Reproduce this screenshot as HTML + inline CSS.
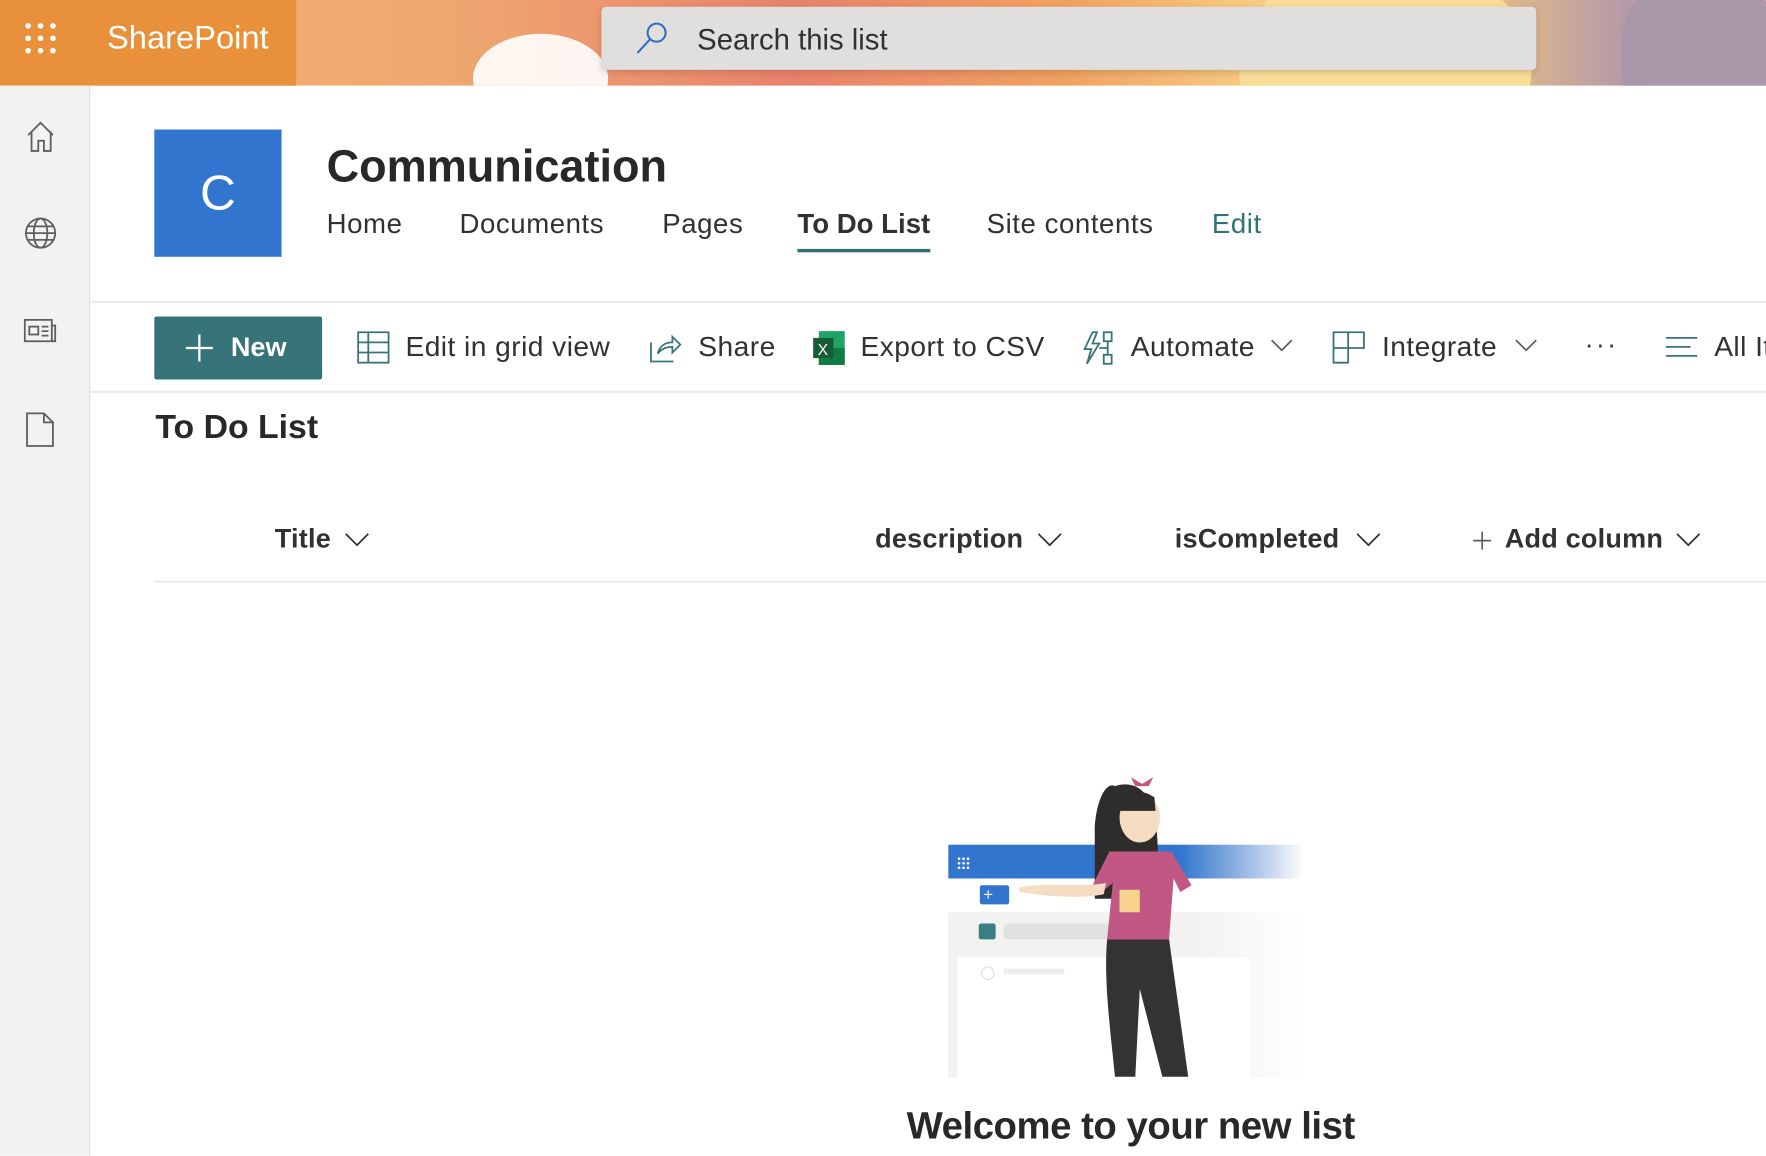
<!DOCTYPE html>
<html><head><meta charset="utf-8"><style>
html,body{margin:0;padding:0;width:1766px;height:1156px;overflow:hidden;background:#fff}
#s{position:absolute;left:0;top:0;width:1568px;height:1026px;transform:scale(1.12628);transform-origin:0 0;font-family:"Liberation Sans",sans-serif;color:#323130}
.a{position:absolute;white-space:nowrap}
.nav{font-size:24.5px;top:186px;letter-spacing:.5px}
.cmd{font-size:25px;top:294px;letter-spacing:.4px}
.col{font-size:24px;font-weight:bold;top:465px;letter-spacing:.2px}
</style></head><body><div id="s">
<!-- banner -->
<div class="a" style="left:0;top:0;width:1568px;height:76px;background:linear-gradient(90deg,#f1b56f 0%,#efa870 25%,#e8826a 45%,#f0a060 60%,#f7cf86 72%,#f5c77a 82%,#b59aa8 92%,#e9a6b8 100%);overflow:hidden">
 <div class="a" style="left:420px;top:30px;width:120px;height:80px;border-radius:50%;background:#fff;opacity:.9"></div>
 <div class="a" style="left:1100px;top:-40px;width:260px;height:200px;border-radius:50%;background:#f9dc96"></div>
 <div class="a" style="left:1440px;top:-20px;width:140px;height:140px;border-radius:40%;background:#a998a9"></div>
</div>
<div class="a" style="left:0;top:0;width:263px;height:76px;background:#e8903a"></div>
<svg class="a" style="left:22px;top:20px" width="30" height="30"><g fill="#fff"><circle cx="3" cy="3" r="2.5"/><circle cx="14" cy="3" r="2.5"/><circle cx="25" cy="3" r="2.5"/><circle cx="3" cy="14" r="2.5"/><circle cx="14" cy="14" r="2.5"/><circle cx="25" cy="14" r="2.5"/><circle cx="3" cy="25" r="2.5"/><circle cx="14" cy="25" r="2.5"/><circle cx="25" cy="25" r="2.5"/></g></svg>
<div class="a" style="left:95px;top:18px;font-size:29px;color:#fff">SharePoint</div>
<div class="a" style="left:534px;top:6px;width:830px;height:56px;background:#e1dfdd;border-radius:4px;box-shadow:0 2px 6px rgba(0,0,0,.15)"></div>
<svg class="a" style="left:563px;top:18px" width="32" height="32"><circle cx="20" cy="11" r="8" fill="none" stroke="#2b6cc4" stroke-width="1.8"/><path d="M14 17 L3 29" stroke="#2b6cc4" stroke-width="1.8"/></svg>
<div class="a" style="left:619px;top:20px;font-size:26px">Search this list</div>
<!-- left rail -->
<div class="a" style="left:0;top:76px;width:79px;height:950px;background:#f3f2f1;border-right:1px solid #e1dfdd"></div>
<svg class="a" style="left:22px;top:107px" width="30" height="30" fill="none" stroke="#605e5c" stroke-width="1.6"><path d="M3 13 L14 2 L25 13 M6 10 V27 H12 V18 H17 V27 H23 V10"/></svg>
<svg class="a" style="left:21px;top:192px" width="30" height="30" fill="none" stroke="#605e5c" stroke-width="1.6"><circle cx="15" cy="15" r="13"/><ellipse cx="15" cy="15" rx="6" ry="13"/><path d="M2 15H28M4 9H26M4 21H26"/></svg>
<svg class="a" style="left:21px;top:283px" width="30" height="22" fill="none" stroke="#605e5c" stroke-width="1.6"><path d="M1 1H25V20H1Z M25 6H28V20H25"/><rect x="5" y="7" width="8" height="7"/><path d="M16 7H22M16 11H22M16 15H22"/></svg>
<svg class="a" style="left:23px;top:366px" width="26" height="32" fill="none" stroke="#605e5c" stroke-width="1.6"><path d="M1 1H16L24 9V30H1Z M16 1V9H24"/></svg>
<!-- site header -->
<div class="a" style="left:137px;top:115px;width:113px;height:113px;background:#3275cf;color:#fff;font-size:44px;text-align:center;line-height:113px">C</div>
<div class="a" style="left:290px;top:126px;font-size:40px;font-weight:bold;color:#292827">Communication</div>
<div class="a nav" style="left:290px">Home</div>
<div class="a nav" style="left:408px">Documents</div>
<div class="a nav" style="left:588px">Pages</div>
<div class="a nav" style="left:708px;font-weight:bold;letter-spacing:0">To Do List</div>
<div class="a" style="left:708px;top:221px;width:118px;height:3px;background:#2e6f73"></div>
<div class="a nav" style="left:876px">Site contents</div>
<div class="a nav" style="left:1076px;color:#2e7478">Edit</div>
<div class="a" style="left:80px;top:267px;width:1488px;height:2px;background:#edebe9"></div>
<!-- command bar -->
<div class="a" style="left:137px;top:281px;width:149px;height:56px;background:#377479;border-radius:2px"></div>
<svg class="a" style="left:164px;top:296px" width="26" height="26" stroke="#fff" stroke-width="2"><path d="M13 1V25M1 13H25"/></svg>
<div class="a" style="left:205px;top:295px;font-size:24px;color:#fff;font-weight:bold">New</div>
<svg class="a" style="left:317px;top:294px" width="30" height="30" fill="none" stroke="#377479" stroke-width="1.6"><rect x="1" y="1" width="27" height="27"/><path d="M1 10H28M1 19H28M10 1V28"/></svg>
<div class="a cmd" style="left:360px">Edit in grid view</div>
<svg class="a" style="left:576px;top:294px" width="30" height="30" fill="none" stroke="#377479" stroke-width="1.6"><path d="M2 10V27H22 M8 20C10 12 16 10 21 10V5L28 12L21 19V14C15 14 11 16 8 20Z"/></svg>
<div class="a cmd" style="left:620px">Share</div>
<svg class="a" style="left:721px;top:293px" width="30" height="32"><rect x="6" y="1" width="23" height="30" fill="#21a366"/><rect x="6" y="16" width="23" height="15" fill="#107c41"/><rect x="1" y="7" width="18" height="18" fill="#185c37"/><text x="5" y="22" font-size="14" fill="#fff" font-family="Liberation Sans">X</text></svg>
<div class="a cmd" style="left:764px">Export to CSV</div>
<svg class="a" style="left:960px;top:293px" width="32" height="32" fill="none" stroke="#377479" stroke-width="1.6"><path d="M10 2L3 17H9L5 30L16 12H10L14 2Z"/><rect x="20" y="2" width="7" height="8"/><rect x="20" y="22" width="7" height="8"/><path d="M23.5 10V22M16 16H23"/></svg>
<div class="a cmd" style="left:1004px">Automate</div>
<svg class="a" style="left:1128px;top:301px" width="20" height="12" fill="none" stroke="#605e5c" stroke-width="1.5"><path d="M1 1L10 10L19 1"/></svg>
<svg class="a" style="left:1183px;top:294px" width="30" height="30" fill="none" stroke="#377479" stroke-width="1.6"><path d="M1 1H28V15H14V28H1Z M14 1V15 M1 15H14"/></svg>
<div class="a cmd" style="left:1227px">Integrate</div>
<svg class="a" style="left:1345px;top:301px" width="20" height="12" fill="none" stroke="#605e5c" stroke-width="1.5"><path d="M1 1L10 10L19 1"/></svg>
<div class="a" style="left:1407px;top:293px;font-size:24px;letter-spacing:2px">···</div>
<svg class="a" style="left:1479px;top:298px" width="30" height="22" stroke="#377479" stroke-width="1.6"><path d="M0 2H28M0 10H22M0 18H28"/></svg>
<div class="a cmd" style="left:1522px">All Items</div>
<div class="a" style="left:80px;top:347px;width:1488px;height:2px;background:#edebe9"></div>
<!-- list -->
<div class="a" style="left:138px;top:363px;font-size:30px;font-weight:bold;color:#292827">To Do List</div>
<div class="a col" style="left:244px">Title</div>
<svg class="a" style="left:306px;top:473px" width="22" height="13" fill="none" stroke="#323130" stroke-width="1.5"><path d="M1 1L11 11L21 1"/></svg>
<div class="a col" style="left:777px">description</div>
<svg class="a" style="left:921px;top:473px" width="22" height="13" fill="none" stroke="#323130" stroke-width="1.5"><path d="M1 1L11 11L21 1"/></svg>
<div class="a col" style="left:1043px">isCompleted</div>
<svg class="a" style="left:1204px;top:473px" width="22" height="13" fill="none" stroke="#323130" stroke-width="1.5"><path d="M1 1L11 11L21 1"/></svg>
<svg class="a" style="left:1307px;top:471px" width="18" height="18" stroke="#605e5c" stroke-width="1.5"><path d="M9 1V17M1 9H17"/></svg>
<div class="a col" style="left:1336px">Add column</div>
<svg class="a" style="left:1488px;top:473px" width="22" height="13" fill="none" stroke="#323130" stroke-width="1.5"><path d="M1 1L11 11L21 1"/></svg>
<div class="a" style="left:137px;top:516px;width:1431px;height:1px;background:#e1dfdd"></div>
<!-- illustration -->
<div class="a" style="left:842px;top:750px;width:316px;height:207px;background:linear-gradient(90deg,#f3f2f1 70%,#fff)"></div>
<div class="a" style="left:842px;top:750px;width:316px;height:30px;background:linear-gradient(90deg,#3275cf 65%,rgba(50,117,207,0))"></div>
<svg class="a" style="left:850px;top:761px" width="12" height="12" fill="#fff"><circle cx="1.5" cy="1.5" r="1.2"/><circle cx="5.5" cy="1.5" r="1.2"/><circle cx="9.5" cy="1.5" r="1.2"/><circle cx="1.5" cy="5.5" r="1.2"/><circle cx="5.5" cy="5.5" r="1.2"/><circle cx="9.5" cy="5.5" r="1.2"/><circle cx="1.5" cy="9.5" r="1.2"/><circle cx="5.5" cy="9.5" r="1.2"/><circle cx="9.5" cy="9.5" r="1.2"/></svg>
<div class="a" style="left:842px;top:780px;width:316px;height:30px;background:#fff"></div>
<div class="a" style="left:870px;top:786px;width:26px;height:17px;background:#3275cf;border-radius:2px;color:#fff;font-size:15px;line-height:17px;text-indent:3px">+</div>
<div class="a" style="left:869px;top:820px;width:15px;height:14px;background:#377f80;border-radius:2px"></div>
<div class="a" style="left:891px;top:820px;width:110px;height:14px;background:#e1e1e1;border-radius:4px"></div>
<div class="a" style="left:850px;top:850px;width:260px;height:107px;background:#fff"></div>
<div class="a" style="left:871px;top:858px;width:10px;height:10px;border:1px solid #ddd;border-radius:50%"></div>
<div class="a" style="left:891px;top:860px;width:54px;height:5px;background:#eee"></div>
<svg class="a" style="left:900px;top:688px" width="170" height="270">
<path d="M90 10 C80 5 72 30 72 50 L72 110 L125 110 C130 80 128 50 125 35 C120 12 105 5 90 10Z" fill="#2f2d2b"/>
<ellipse cx="112" cy="38" rx="18" ry="22" fill="#f5dcc2"/>
<path d="M93 30 C95 15 110 10 125 20 L126 32 L93 32Z" fill="#2f2d2b"/>
<path d="M104 2 L114 8 L124 2 L120 10 L108 10Z" fill="#c2577f"/>
<path d="M85 68 L140 68 L158 98 L148 104 L142 92 L138 146 L83 146 L88 96 L78 104 L70 98Z" fill="#c05784"/>
<path d="M5 100 C30 95 60 100 82 96 L80 106 C60 110 30 108 5 104Z" fill="#f5dcc2"/>
<rect x="94" y="102" width="18" height="20" fill="#f7d48e"/>
<path d="M83 146 L138 146 L155 268 L132 268 L112 190 L108 268 L90 268 C85 220 80 180 83 146Z" fill="#353331"/>
</svg>
<div class="a" style="left:805px;top:981px;font-size:34px;font-weight:bold;color:#292827;letter-spacing:-.4px">Welcome to your new list</div>
</div></body></html>
